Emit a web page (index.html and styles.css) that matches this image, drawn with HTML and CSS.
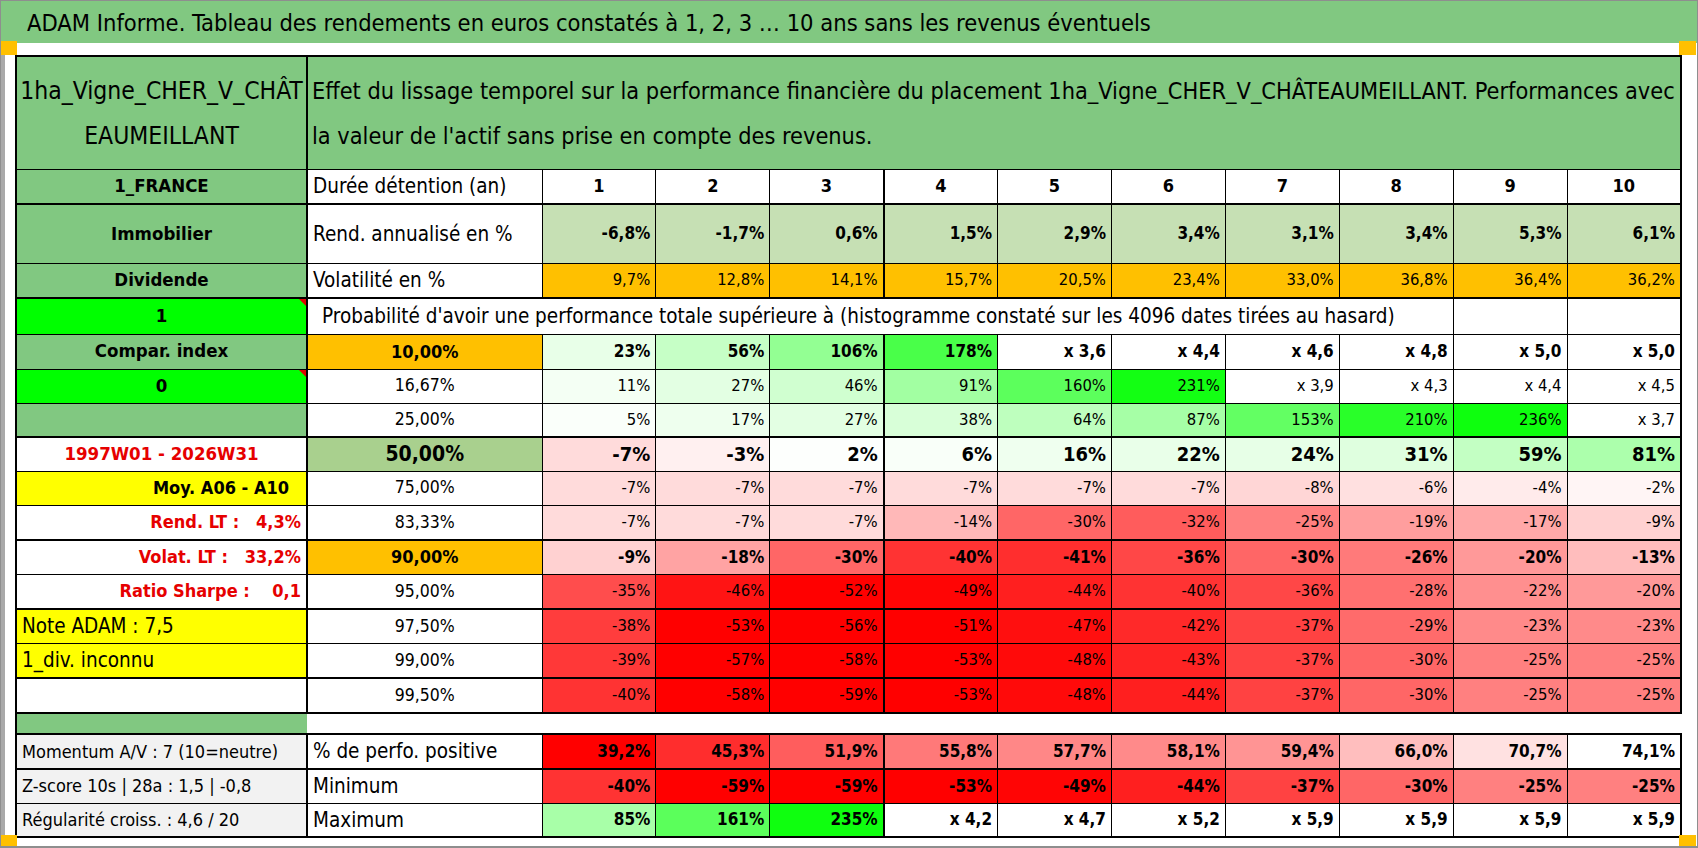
FILE: index.html
```html
<!DOCTYPE html>
<html lang="fr">
<head>
<meta charset="utf-8">
<title>ADAM Informe</title>
<link rel="stylesheet" href="styles.css">
</head>
<body>
<div class="sheet">
  <div class="title">ADAM Informe. Tableau des rendements en euros constatés à 1, 2, 3 … 10 ans sans les revenus éventuels</div>
  <div class="strip"></div>
  <div class="main">
    <div class="edge"></div>
    <table class="grid">
      <colgroup>
        <col class="col-a"><col class="col-b">
        <col class="col-n"><col class="col-n"><col class="col-n"><col class="col-n"><col class="col-n">
        <col class="col-n"><col class="col-n"><col class="col-n"><col class="col-n"><col class="col-n">
      </colgroup>
      <tr class="r-head">
        <td class="a green head-a">1ha_Vigne_CHER_V_CHÂT<br>EAUMEILLANT</td>
        <td class="green head-b" colspan="11">Effet du lissage temporel sur la performance financière du placement 1ha_Vigne_CHER_V_CHÂTEAUMEILLANT. Performances avec<br>la valeur de l'actif sans prise en compte des revenus.</td>
      </tr>
      <tr class="r35">
        <td class="a green lab-a">1_FRANCE</td>
        <td class="lab">Durée détention (an)</td>
        <td class="yr">1</td><td class="yr">2</td><td class="yr c3">3</td><td class="yr">4</td><td class="yr">5</td>
        <td class="yr">6</td><td class="yr">7</td><td class="yr">8</td><td class="yr">9</td><td class="yr">10</td>
      </tr>
      <tr class="r59 tk">
        <td class="a green lab-a">Immobilier</td>
        <td class="lab">Rend. annualisé en %</td>
        <td class="nb rend">-6,8%</td><td class="nb rend">-1,7%</td><td class="nb rend c3">0,6%</td><td class="nb rend">1,5%</td><td class="nb rend">2,9%</td>
        <td class="nb rend">3,4%</td><td class="nb rend">3,1%</td><td class="nb rend">3,4%</td><td class="nb rend">5,3%</td><td class="nb rend">6,1%</td>
      </tr>
      <tr class="r35">
        <td class="a green lab-a">Dividende</td>
        <td class="lab">Volatilité en %</td>
        <td class="n orange">9,7%</td><td class="n orange">12,8%</td><td class="n orange c3">14,1%</td><td class="n orange">15,7%</td><td class="n orange">20,5%</td>
        <td class="n orange">23,4%</td><td class="n orange">33,0%</td><td class="n orange">36,8%</td><td class="n orange">36,4%</td><td class="n orange">36,2%</td>
      </tr>
      <tr class="r36 tk">
        <td class="a lime lab-a note">1</td>
        <td class="prob" colspan="9">Probabilité d'avoir une performance totale supérieure à (histogramme constaté sur les 4096 dates tirées au hasard)</td>
        <td></td><td></td>
      </tr>
      <tr class="r35">
        <td class="a green lab-a">Compar. index</td>
        <td class="pct pb orange">10,00%</td>
        <td class="nb" style="background:rgb(232,255,232)">23%</td>
        <td class="nb" style="background:rgb(198,255,198)">56%</td>
        <td class="nb c3" style="background:rgb(147,255,147)">106%</td>
        <td class="nb" style="background:rgb(73,255,73)">178%</td>
        <td class="nb">x 3,6</td><td class="nb">x 4,4</td><td class="nb">x 4,6</td><td class="nb">x 4,8</td><td class="nb">x 5,0</td><td class="nb">x 5,0</td>
      </tr>
      <tr class="r34">
        <td class="a lime lab-a note">0</td>
        <td class="pct">16,67%</td>
        <td class="n" style="background:rgb(244,255,244)">11%</td>
        <td class="n" style="background:rgb(227,255,227)">27%</td>
        <td class="n c3" style="background:rgb(208,255,208)">46%</td>
        <td class="n" style="background:rgb(162,255,162)">91%</td>
        <td class="n" style="background:rgb(92,255,92)">160%</td>
        <td class="n" style="background:rgb(19,255,19)">231%</td>
        <td class="n">x 3,9</td><td class="n">x 4,3</td><td class="n">x 4,4</td><td class="n">x 4,5</td>
      </tr>
      <tr class="r34">
        <td class="a green"></td>
        <td class="pct">25,00%</td>
        <td class="n" style="background:rgb(250,255,250)">5%</td>
        <td class="n" style="background:rgb(238,255,238)">17%</td>
        <td class="n c3" style="background:rgb(227,255,227)">27%</td>
        <td class="n" style="background:rgb(216,255,216)">38%</td>
        <td class="n" style="background:rgb(190,255,190)">64%</td>
        <td class="n" style="background:rgb(166,255,166)">87%</td>
        <td class="n" style="background:rgb(99,255,99)">153%</td>
        <td class="n" style="background:rgb(41,255,41)">210%</td>
        <td class="n" style="background:rgb(14,255,14)">236%</td>
        <td class="n">x 3,7</td>
      </tr>
      <tr class="r34 tk">
        <td class="a red-t lab-a">1997W01 - 2026W31</td>
        <td class="pct big mid-green">50,00%</td>
        <td class="nx" style="background:rgb(255,219,219)">-7%</td>
        <td class="nx" style="background:rgb(255,240,240)">-3%</td>
        <td class="nx c3" style="background:rgb(253,255,253)">2%</td>
        <td class="nx" style="background:rgb(249,255,249)">6%</td>
        <td class="nx" style="background:rgb(239,255,239)">16%</td>
        <td class="nx" style="background:rgb(233,255,233)">22%</td>
        <td class="nx" style="background:rgb(231,255,231)">24%</td>
        <td class="nx" style="background:rgb(223,255,223)">31%</td>
        <td class="nx" style="background:rgb(195,255,195)">59%</td>
        <td class="nx" style="background:rgb(172,255,172)">81%</td>
      </tr>
      <tr class="r34">
        <td class="a yellow lab-r lab-dark">Moy. A06 - A10</td>
        <td class="pct">75,00%</td>
        <td class="n" style="background:rgb(255,219,219)">-7%</td>
        <td class="n" style="background:rgb(255,219,219)">-7%</td>
        <td class="n c3" style="background:rgb(255,219,219)">-7%</td>
        <td class="n" style="background:rgb(255,219,219)">-7%</td>
        <td class="n" style="background:rgb(255,219,219)">-7%</td>
        <td class="n" style="background:rgb(255,219,219)">-7%</td>
        <td class="n" style="background:rgb(255,214,214)">-8%</td>
        <td class="n" style="background:rgb(255,224,224)">-6%</td>
        <td class="n" style="background:rgb(255,235,235)">-4%</td>
        <td class="n" style="background:rgb(255,245,245)">-2%</td>
      </tr>
      <tr class="r35">
        <td class="a red-t lab-r">Rend. LT :   4,3%</td>
        <td class="pct">83,33%</td>
        <td class="n" style="background:rgb(255,219,219)">-7%</td>
        <td class="n" style="background:rgb(255,219,219)">-7%</td>
        <td class="n c3" style="background:rgb(255,219,219)">-7%</td>
        <td class="n" style="background:rgb(255,184,184)">-14%</td>
        <td class="n" style="background:rgb(255,102,102)">-30%</td>
        <td class="n" style="background:rgb(255,92,92)">-32%</td>
        <td class="n" style="background:rgb(255,128,128)">-25%</td>
        <td class="n" style="background:rgb(255,158,158)">-19%</td>
        <td class="n" style="background:rgb(255,168,168)">-17%</td>
        <td class="n" style="background:rgb(255,209,209)">-9%</td>
      </tr>
      <tr class="r34 tk">
        <td class="a red-t lab-r">Volat. LT :   33,2%</td>
        <td class="pct pb orange">90,00%</td>
        <td class="nb" style="background:rgb(255,209,209)">-9%</td>
        <td class="nb" style="background:rgb(255,163,163)">-18%</td>
        <td class="nb c3" style="background:rgb(255,102,102)">-30%</td>
        <td class="nb" style="background:rgb(255,51,51)">-40%</td>
        <td class="nb" style="background:rgb(255,46,46)">-41%</td>
        <td class="nb" style="background:rgb(255,71,71)">-36%</td>
        <td class="nb" style="background:rgb(255,102,102)">-30%</td>
        <td class="nb" style="background:rgb(255,122,122)">-26%</td>
        <td class="nb" style="background:rgb(255,153,153)">-20%</td>
        <td class="nb" style="background:rgb(255,189,189)">-13%</td>
      </tr>
      <tr class="r35">
        <td class="a red-t lab-r">Ratio Sharpe :    0,1</td>
        <td class="pct">95,00%</td>
        <td class="n" style="background:rgb(255,77,77)">-35%</td>
        <td class="n" style="background:rgb(255,20,20)">-46%</td>
        <td class="n c3" style="background:rgb(255,0,0)">-52%</td>
        <td class="n" style="background:rgb(255,5,5)">-49%</td>
        <td class="n" style="background:rgb(255,31,31)">-44%</td>
        <td class="n" style="background:rgb(255,51,51)">-40%</td>
        <td class="n" style="background:rgb(255,71,71)">-36%</td>
        <td class="n" style="background:rgb(255,112,112)">-28%</td>
        <td class="n" style="background:rgb(255,143,143)">-22%</td>
        <td class="n" style="background:rgb(255,153,153)">-20%</td>
      </tr>
      <tr class="r34 tk">
        <td class="a yellow lab-l">Note ADAM : 7,5</td>
        <td class="pct">97,50%</td>
        <td class="n" style="background:rgb(255,61,61)">-38%</td>
        <td class="n" style="background:rgb(255,0,0)">-53%</td>
        <td class="n c3" style="background:rgb(255,0,0)">-56%</td>
        <td class="n" style="background:rgb(255,0,0)">-51%</td>
        <td class="n" style="background:rgb(255,15,15)">-47%</td>
        <td class="n" style="background:rgb(255,41,41)">-42%</td>
        <td class="n" style="background:rgb(255,66,66)">-37%</td>
        <td class="n" style="background:rgb(255,107,107)">-29%</td>
        <td class="n" style="background:rgb(255,138,138)">-23%</td>
        <td class="n" style="background:rgb(255,138,138)">-23%</td>
      </tr>
      <tr class="r35">
        <td class="a yellow lab-l">1_div. inconnu</td>
        <td class="pct">99,00%</td>
        <td class="n" style="background:rgb(255,56,56)">-39%</td>
        <td class="n" style="background:rgb(255,0,0)">-57%</td>
        <td class="n c3" style="background:rgb(255,0,0)">-58%</td>
        <td class="n" style="background:rgb(255,0,0)">-53%</td>
        <td class="n" style="background:rgb(255,10,10)">-48%</td>
        <td class="n" style="background:rgb(255,36,36)">-43%</td>
        <td class="n" style="background:rgb(255,66,66)">-37%</td>
        <td class="n" style="background:rgb(255,102,102)">-30%</td>
        <td class="n" style="background:rgb(255,128,128)">-25%</td>
        <td class="n" style="background:rgb(255,128,128)">-25%</td>
      </tr>
      <tr class="r35 tk">
        <td class="a"></td>
        <td class="pct">99,50%</td>
        <td class="n" style="background:rgb(255,51,51)">-40%</td>
        <td class="n" style="background:rgb(255,0,0)">-58%</td>
        <td class="n c3" style="background:rgb(255,0,0)">-59%</td>
        <td class="n" style="background:rgb(255,0,0)">-53%</td>
        <td class="n" style="background:rgb(255,10,10)">-48%</td>
        <td class="n" style="background:rgb(255,31,31)">-44%</td>
        <td class="n" style="background:rgb(255,66,66)">-37%</td>
        <td class="n" style="background:rgb(255,102,102)">-30%</td>
        <td class="n" style="background:rgb(255,128,128)">-25%</td>
        <td class="n" style="background:rgb(255,128,128)">-25%</td>
      </tr>
      <tr class="r21 tk">
        <td class="a green gap-a"></td>
        <td class="gap" colspan="11"></td>
      </tr>
      <tr class="r35 tk">
        <td class="a grey lab-l small">Momentum A/V : 7 (10=neutre)</td>
        <td class="lab">% de perfo. positive</td>
        <td class="nb" style="background:rgb(255,0,0)">39,2%</td>
        <td class="nb" style="background:rgb(255,45,45)">45,3%</td>
        <td class="nb c3" style="background:rgb(255,93,93)">51,9%</td>
        <td class="nb" style="background:rgb(255,121,121)">55,8%</td>
        <td class="nb" style="background:rgb(255,135,135)">57,7%</td>
        <td class="nb" style="background:rgb(255,138,138)">58,1%</td>
        <td class="nb" style="background:rgb(255,148,148)">59,4%</td>
        <td class="nb" style="background:rgb(255,190,190)">66,0%</td>
        <td class="nb" style="background:rgb(255,225,225)">70,7%</td>
        <td class="nb">74,1%</td>
      </tr>
      <tr class="r34 tk">
        <td class="a grey lab-l small">Z-score 10s | 28a : 1,5 | -0,8</td>
        <td class="lab">Minimum</td>
        <td class="nb" style="background:rgb(255,51,51)">-40%</td>
        <td class="nb" style="background:rgb(255,0,0)">-59%</td>
        <td class="nb c3" style="background:rgb(255,0,0)">-59%</td>
        <td class="nb" style="background:rgb(255,0,0)">-53%</td>
        <td class="nb" style="background:rgb(255,5,5)">-49%</td>
        <td class="nb" style="background:rgb(255,31,31)">-44%</td>
        <td class="nb" style="background:rgb(255,66,66)">-37%</td>
        <td class="nb" style="background:rgb(255,102,102)">-30%</td>
        <td class="nb" style="background:rgb(255,128,128)">-25%</td>
        <td class="nb" style="background:rgb(255,128,128)">-25%</td>
      </tr>
      <tr class="r34">
        <td class="a grey lab-l small">Régularité croiss. : 4,6 / 20</td>
        <td class="lab">Maximum</td>
        <td class="nb" style="background:rgb(168,255,168)">85%</td>
        <td class="nb" style="background:rgb(91,255,91)">161%</td>
        <td class="nb c3" style="background:rgb(15,255,15)">235%</td>
        <td class="nb">x 4,2</td><td class="nb">x 4,7</td><td class="nb">x 5,2</td><td class="nb">x 5,9</td><td class="nb">x 5,9</td><td class="nb">x 5,9</td><td class="nb">x 5,9</td>
      </tr>
    </table>
  </div>
  <span class="handle h-tl"></span>
  <span class="handle h-tr"></span>
  <span class="handle h-bl"></span>
  <span class="handle h-br"></span>
</div>
</body>
</html>
```

FILE: styles.css
```css
* { box-sizing: border-box; }
html, body { margin: 0; padding: 0; background: #fff; }
body {
  font-family: "DejaVu Sans Condensed", "DejaVu Sans", sans-serif;
  font-stretch: condensed;
  color: #000;
}
.sheet {
  position: relative;
  width: 1698px;
  height: 848px;
  overflow: hidden;
  border: 1px solid #8e8e8e;
  border-bottom-width: 2px;
  display: flex;
  flex-direction: column;
}
.title {
  flex: none;
  height: 42px;
  background: #81c881;
  padding-left: 26px;
  font-size: 23.5px;
  line-height: 44px;
  white-space: nowrap;
}
.strip { flex: none; height: 12px; }
.main { flex: 1; display: flex; align-items: flex-start; }
.edge { align-self: stretch; width: 4px; background: #a9a9a9; margin-right: 10px; flex: none; }

.grid {
  border-collapse: collapse;
  table-layout: fixed;
  width: 1665px;
  border: 2px solid #000;
}
.col-a { width: 291px; }
.col-b { width: 235px; }
.col-n { width: 113.9px; }

.grid td {
  border: 1px solid #000;
  padding: 0 5px;
  white-space: pre;
  overflow: hidden;
  vertical-align: middle;
  font-size: 16.5px;
  line-height: 1;
}
.grid tr.tk > td { border-top: 2px solid #000; }
.grid td.a { border-right: 2px solid #000; }
.grid td.c3 { border-right: 2px solid #000; }

.r-head { height: 113px; }
.r59 { height: 59px; }
.r36 { height: 36px; }
.r35 { height: 35px; }
.r34 { height: 34px; }
.r21 { height: 21px; }

.green { background: #81c881; }
.lime { background: #00ff00; }
.yellow { background: #ffff00; }
.orange { background: #ffc000; }
.grey { background: #f2f2f2; }
.mid-green { background: #a9d08e; }
.rend { background: #c6e0b4; }

.grid .head-a {
  text-align: center;
  font-size: 24.5px;
  line-height: 45px;
  padding: 0 2px;
}
.grid .head-b {
  text-align: left;
  font-size: 23.3px;
  line-height: 45px;
  padding-left: 4px;
}
.grid .lab-a { text-align: center; font-weight: 700; font-size: 18.5px; }
.grid .lab-r { text-align: right; font-weight: 700; font-size: 18px; }
.grid .lab-l { text-align: left; font-size: 20.5px; padding-left: 5px; }
.grid .lab-dark { padding-right: 17px; }
.red-t { color: #e60000; }
.grid .lab { text-align: left; font-size: 20.5px; padding-left: 5px; }
.grid .small { font-size: 18px; }
.grid .yr { text-align: center; font-weight: 700; font-size: 18px; }
.grid .n { text-align: right; font-size: 16.5px; }
.grid .nb { text-align: right; font-weight: 700; font-size: 17px; }
.grid .nx { text-align: right; font-weight: 700; font-size: 20px; }
.grid .pct { text-align: center; font-size: 17.5px; }
.grid .pb { font-weight: 700; font-size: 18px; }
.grid .big { font-weight: 700; font-size: 21px; }
.grid .prob { text-align: left; font-size: 20.5px; padding-left: 14px; }
.grid .gap { border-left-style: hidden; border-right-style: hidden; }
.grid .gap-a { border-right-style: hidden; }

.note { position: relative; }
.note::after {
  content: "";
  position: absolute;
  top: 0;
  right: 0;
  border-style: solid;
  border-width: 0 7px 7px 0;
  border-color: transparent #e00000 transparent transparent;
}

.handle { position: absolute; background: #ffc000; width: 17px; height: 14px; }
.h-tl { left: -1px; top: 40px; }
.h-tr { right: 1px; top: 40px; }
.h-bl { left: -1px; bottom: 0; height: 11px; }
.h-br { right: 1px; bottom: 0; height: 11px; }
```
